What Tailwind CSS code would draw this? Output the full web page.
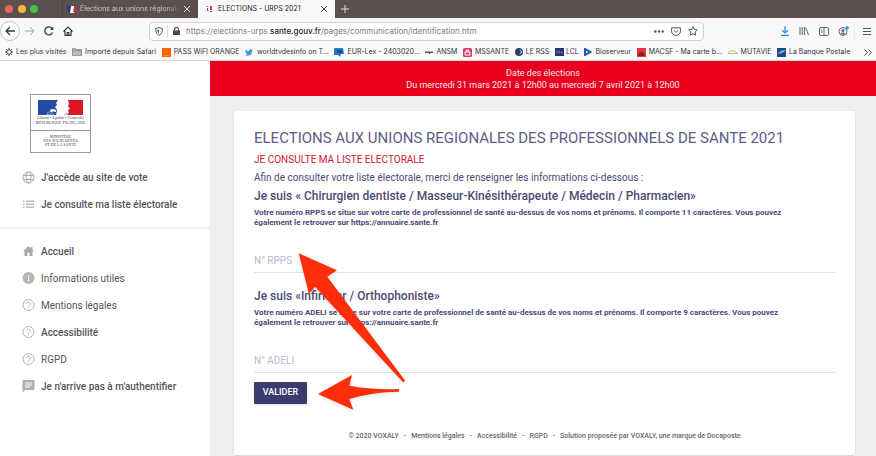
<!DOCTYPE html>
<html lang="fr">
<head>
    <meta charset="UTF-8">
    <meta name="viewport" content="width=device-width, initial-scale=1.0">
    <title>ELECTIONS - URPS 2021</title>
    <script src="https://cdn.jsdelivr.net/npm/@tailwindcss/browser@4"></script>
</head>
<body class="min-h-screen flex flex-col bg-[#eeeeee] font-[Roboto,sans-serif] text-[#4b4a75]">

    <!-- Browser window -->
    <header class="font-[Inter,sans-serif] bg-[#f9f9fb] text-[#333333] border-b border-[#d8d4d8]">

        <!-- Tabs -->
        <div class="flex h-[18px] bg-[#5a504e] text-[7px] leading-[18px]">
            <div class="flex items-center gap-1 w-[62px] pl-[5px]">
                <span class="size-2 rounded-full bg-[#f0605a]"></span>
                <span class="size-2 rounded-full bg-[#f5b83d] ml-px"></span>
                <span class="size-2 rounded-full bg-[#45c048]"></span>
            </div>
            <div class="flex items-center w-[136px] border-l border-[#4d4442] pl-1 pr-2 text-[#d0c8c6]">
                <svg class="w-[10px] h-[7px] shrink-0 mr-[3px]" viewBox="0 0 10 7"><path fill="#26337f" d="M0 0h4v6H1z"/><path fill="#fff" d="M4 0h3v7H3z"/><path fill="#d22a3c" d="M7 1h3v5H6z"/></svg>
                <span class="flex-1 whitespace-nowrap mask-r-from-85%">Élections aux unions régionale</span>
                <button type="button" aria-label="Fermer" class="ml-1"><svg class="size-[6px]" viewBox="0 0 6 6" fill="none" stroke="#e2dddb"><path d="M0 0l6 6M6 0L0 6"/></svg></button>
            </div>
            <div class="flex items-center w-[137px] bg-[#f9f9fb] pl-2 pr-2">
                <svg class="w-[6px] h-[6px] mr-[6px]" viewBox="0 0 6 6"><path fill="#8f8fae" d="M0 0h2v1H0z"/><path fill="#e3374a" d="M1 2h1v3H1zM4 0h2v4H4zM4 5h2v1H4z"/></svg>
                <span class="flex-1 whitespace-nowrap text-[#222222]">ELECTIONS - URPS 2021</span>
                <button type="button" aria-label="Fermer"><svg class="size-[6px]" viewBox="0 0 6 6" fill="none" stroke="#444"><path d="M0 0l6 6M6 0L0 6"/></svg></button>
            </div>
            <button type="button" aria-label="Nouvel onglet" class="pl-[6px]"><svg class="size-2" viewBox="0 0 8 8" fill="none" stroke="#e2dddb"><path d="M4 0v8M0 4h8"/></svg></button>
        </div>

        <!-- Address bar -->
        <div class="flex items-center h-[26px] pr-1">
            <button type="button" aria-label="Retour" class="size-5 rounded-full border border-[#c4c4c8] bg-white flex items-center justify-center">
                <svg class="size-[10px]" viewBox="0 0 10 10" fill="none" stroke="#3a3a3f" stroke-width="1.3"><path d="M10 5H1M5 1L1 5l4 4"/></svg>
            </button>
            <button type="button" aria-label="Suivant" class="ml-[5px]"><svg class="size-[10px]" viewBox="0 0 10 10" fill="none" stroke="#a3a3a8"><path d="M0 5h9M5 1l4 4-4 4"/></svg></button>
            <button type="button" aria-label="Actualiser" class="ml-[9px]"><svg class="size-[10px]" viewBox="0 0 10 10" fill="none" stroke="#3a3a3f" stroke-width="1.3"><path d="M8.5 6.5A4 4 0 1 1 8 2.5"/><path d="M9.300 .5v3.500H6z" fill="#3a3a3f" stroke="none"/></svg></button>
            <button type="button" aria-label="Page d'accueil" class="ml-[9px]"><svg class="size-[10px]" viewBox="0 0 10 10" fill="none" stroke="#3a3a3f" stroke-width="1.2"><path d="M.5 5.500L5 1l4.500 4.500M2 5v4.300h6V5M4.200 9V6.500h1.600V9"/></svg></button>
            <div class="flex items-center ml-[76px] w-[555px] h-[19px] border border-[#cfcfd4] rounded-sm bg-white px-[5px] text-[8px]">
                <svg class="w-2 h-[9px]" viewBox="0 0 8 9" fill="none" stroke="#55555a"><path d="M4 .6L7.400 1.500C7.400 5 6.500 7.200 4 8.400 1.500 7.200.6 5 .6 1.500z"/><path d="M4 2.500v4C2.800 5.600 2.400 4.500 2.300 3z" fill="#55555a" stroke="none"/></svg>
                <span class="w-px h-[13px] bg-[#dddddf] mx-1"></span>
                <svg class="w-[7px] h-2 ml-px" viewBox="0 0 7 8"><path fill="#4a4a4f" d="M0 3.500h7V8H0z"/><path fill="none" stroke="#4a4a4f" stroke-width="1.200" d="M1.500 4V2.500a2 2 0 0 1 4 0V4"/></svg>
                <span class="flex-1 ml-[6px] whitespace-nowrap text-[#7b7b80]">https://elections-urps.<span class="text-[#222222] font-medium">sante.gouv.fr</span>/pages/communication/identification.htm</span>
                <svg class="w-[10px] h-[3px]" viewBox="0 0 10 3" fill="#55555a"><circle cx="1.300" cy="1.500" r="1.200"/><circle cx="5" cy="1.500" r="1.200"/><circle cx="8.700" cy="1.500" r="1.200"/></svg>
                <svg class="w-[10px] h-[9px] ml-[7px]" viewBox="0 0 10 9" fill="none" stroke="#55555a"><path d="M.6.8h8.800v3.400a4.400 4.200 0 0 1-8.800 0z"/><path d="M2.700 3.200L5 5.400l2.300-2.200"/></svg>
                <svg class="size-[10px] ml-[7px]" viewBox="0 0 10 10" fill="none" stroke="#55555a" stroke-linejoin="round"><path d="M5 .7l1.300 2.800 3 .4-2.200 2.100.6 3.100L5 7.600 2.300 9.100l.6-3.100L.7 3.900l3-.4z"/></svg>
            </div>
            <div class="flex items-center ml-auto">
                <svg class="size-[10px]" viewBox="0 0 10 10" fill="none" stroke="#2f8ce0" stroke-width="1.200"><path d="M5 0v7M2 4.200L5 7l3-2.800M1 9.300h8"/></svg>
                <svg class="size-[10px] ml-[9px]" viewBox="0 0 10 10" fill="none" stroke="#66666b"><path d="M1 1v8M3.200 1v8M5.400 1v8M6.700 1.500L9.500 9"/></svg>
                <svg class="w-[10px] h-[9px] ml-[10px]" viewBox="0 0 10 9" fill="none" stroke="#66666b"><rect x=".5" y=".5" width="9" height="8" rx="1.500"/><path d="M5 .5v8M2 3h1.500M2 5h1.500"/></svg>
                <svg class="w-[11px] h-[10px] ml-[9px]" viewBox="0 0 11 10"><circle cx="5" cy="5.500" r="4" fill="none" stroke="#66666b"/><circle cx="5" cy="4.500" r="1.500" fill="#66666b"/><path d="M2.500 7.500a2.700 1.600 0 0 1 5 0L5 9z" fill="#66666b"/><circle cx="9.200" cy="1.800" r="1.700" fill="#2ba3ea"/></svg>
                <span class="w-px h-[18px] bg-[#ebebee] mx-[5px]"></span>
                <svg class="w-2 h-[9px] ml-[3px] mr-px" viewBox="0 0 8 9" stroke="#55555a"><path d="M0 1.500h8M0 4.500h8M0 7.500h8"/></svg>
            </div>
        </div>

        <!-- Bookmarks -->
        <nav class="h-4 text-[7px] leading-4 text-[#333333]">
            <ul class="flex items-center justify-between whitespace-nowrap pl-[5px] pr-1">
                <li><a href="#" class="flex items-center gap-[3px]"><svg class="size-2" viewBox="0 0 8 8" fill="none" stroke="#3c3c40"><circle cx="4" cy="4" r="2.300"/><path d="M4 0v1.500M4 6.500V8M0 4h1.500M6.500 4H8M1.200 1.200l1 1M5.800 5.800l1 1M1.200 6.800l1-1M5.800 2.200l1-1"/></svg>Les plus visités</a></li>
                <li><a href="#" class="flex items-center gap-[3px]"><svg class="w-[10px] h-2" viewBox="0 0 10 8"><path fill="#bdbdc0" stroke="#77777b" stroke-width=".7" d="M.5.600h3l1 1h5v6h-9zM.5 2.800h9"/></svg>Importé depuis Safari</a></li>
                <li><a href="#" class="flex items-center gap-[3px]"><svg class="size-[9px]" viewBox="0 0 9 9"><path fill="#fa6400" d="M0 0h9v9H0z"/><path fill="#ffa35e" d="M2 7h5v.700H2z"/></svg>PASS WiFI ORANGE</a></li>
                <li><a href="#" class="flex items-center gap-[4px]"><svg class="w-2 h-[7px]" viewBox="0 0 24 20"><path fill="#3d9be0" d="M24 2.400a10 10 0 0 1-2.800.8A5 5 0 0 0 23.300.500a10 10 0 0 1-3.100 1.200A4.900 4.900 0 0 0 11.800 6.200 14 14 0 0 1 1.700 1a4.900 4.900 0 0 0 1.500 6.600L1 7a4.900 4.900 0 0 0 3.900 4.900l-2.200.1a4.900 4.900 0 0 0 4.600 3.400A10 10 0 0 1 0 17.500 14 14 0 0 0 21.500 5z"/></svg>worldtvdesinfo on T...</a></li>
                <li><a href="#" class="flex items-center gap-[3px]"><svg class="w-[10px] h-[9px]" viewBox="0 0 10 9"><path fill="#1d7cc4" d="M1 0h8l1 6H7L6 9 4 7H0V1z"/><path fill="#15508e" d="M3 2h5v3H3z"/></svg>EUR-Lex - 2403020...</a></li>
                <li><a href="#" class="flex items-center gap-[3px]"><svg class="w-[8px] h-[3px]" viewBox="0 0 8 3"><path fill="#55555c" d="M0 .500h8v1.500H5V3H4V2H0z"/></svg>ANSM</a></li>
                <li><a href="#" class="flex items-center gap-[3px]"><svg class="size-[9px]" viewBox="0 0 9 9"><rect width="9" height="9" rx="1.500" fill="#d83a69"/><path fill="none" stroke="#fff" d="M2 4h5v3H2zM3.300 4V2h2.400v2"/></svg>MSSANTE</a></li>
                <li><a href="#" class="flex items-center gap-[3px]"><svg class="size-2" viewBox="0 0 8 8"><circle cx="4" cy="4" r="4" fill="#2c3e68"/><path fill="#a9bdd2" d="M4.500 1.500C8 2 8 6 4 6.500 6 5 6 3 4.500 1.500z"/></svg>LE RSS</a></li>
                <li><a href="#" class="flex items-center gap-[2px]"><svg class="w-[9px] h-2" viewBox="0 0 9 8"><path fill="#26336c" d="M0 0h9v8H0z"/><path fill="none" stroke="#8b94bc" stroke-width=".7" d="M1 3h1v2h1M5 3H4v2h1M6.500 3v2H8"/></svg>LCL</a></li>
                <li><a href="#" class="flex items-center gap-[3px]"><svg class="size-2" viewBox="0 0 8 8"><path fill="none" stroke="#255da8" stroke-width="2" d="M1 1l5.500 3L1 7z"/></svg>Bioserveur</a></li>
                <li><a href="#" class="flex items-center gap-[3px]"><svg class="size-[9px]" viewBox="0 0 9 9"><path fill="#de3640" d="M0 0h9v9H0z"/><path fill="#8f1c2e" d="M1 8l2-5 1.500 2L6 3l2 5z"/></svg>MACSF - Ma carte b...</a></li>
                <li><a href="#" class="flex items-center gap-[3px]"><svg class="w-[10px] h-[4px]" viewBox="0 0 10 4" fill="none"><path stroke="#d6b544" d="M0 3c2-3 6-3 9 0"/><path stroke="#7a9c79" d="M0 3.500h10" stroke-width=".6"/></svg>MUTAVIE</a></li>
                <li><a href="#" class="flex items-center gap-[3px]"><svg class="size-[9px]" viewBox="0 0 9 9"><path fill="#1c4c7e" d="M0 0h9v9H0z"/><path fill="#5ea6cf" d="M1 6c2-4 4-4 8-4L6 5z"/></svg>La Banque Postale</a></li>
                <li><button type="button" aria-label="Plus de marque-pages" class="ml-2 flex"><svg class="w-2 h-[7px]" viewBox="0 0 8 7" fill="none" stroke="#444"><path d="M.5.500l3 3-3 3M4.500.500l3 3-3 3"/></svg></button></li>
            </ul>
        </nav>
    </header>

    <div class="flex flex-1">

        <!-- Side menu -->
        <aside class="w-[210px] shrink-0 bg-white text-[10px] leading-[15px] text-[#555555]">
            <div class="ml-[30px] mt-[33px] w-[61px] border border-[#999999] text-center font-['Liberation_Serif',serif] text-[#444444]">
                <div class="h-9 pt-[5px] border-b border-[#999999]">
                    <svg class="mx-auto w-[45px] h-[15px]" viewBox="0 0 45 15">
                        <path fill="#2548a0" d="M0 0h20l-2 3 1 2-2 2 2 3-1 5H0z"/>
                        <path fill="#fff" d="M12 10c2-1.500 4-1 6 0v2l-3-.5-2 1z"/>
                        <path fill="none" stroke="#b9c6e6" stroke-width=".8" d="M9 13c2-1 3-2 6-1M8 14.500c3 0 5-1 8-.5"/>
                        <path fill="#dc1622" d="M30 0h15v15H27l4-2-1-3 2-1-2-3 1-2z"/>
                        <path fill="#c9c9d2" d="M27 13c1-1 3 0 3 2h-4z"/>
                    </svg>
                    <p class="text-[4px] leading-[5px] italic whitespace-nowrap">Liberté • Égalité • Fraternité</p>
                    <p class="text-[5px] leading-[6px] whitespace-nowrap [font-variant:small-caps]">République Française</p>
                </div>
                <div class="h-[21px] pt-1 text-[4px] leading-[4px]">
                    <p>MINISTÈRE</p>
                    <p>DES SOLIDARITÉS</p>
                    <p>ET DE LA SANTÉ</p>
                </div>
            </div>

            <ul class="mt-[17px] pb-[15px] pl-[22px] space-y-3 border-b-2 border-[#f0f0f0] font-medium">
                <li><a href="#" class="flex items-center gap-[6px]"><svg class="size-[13px]" viewBox="0 0 13 13" fill="none" stroke="#aaaaaa"><circle cx="6.500" cy="6.500" r="5.500"/><ellipse cx="6.500" cy="6.500" rx="2.500" ry="5.500"/><path d="M1.500 4.500h10M1.500 8.500h10"/></svg>J'accède au site de vote</a></li>
                <li><a href="#" class="flex items-center gap-[6px]"><svg class="size-[13px]" viewBox="0 0 13 13" fill="#bbbbbb"><path d="M1 2.500h1.500V4H1zM1 5.500h1.500V7H1zM1 8.500h1.500V10H1zM4 2.500h8V4H4zM4 5.500h8V7H4zM4 8.500h8V10H4z"/></svg>Je consulte ma liste électorale</a></li>
            </ul>

            <ul class="mt-[15px] pl-[22px] space-y-3">
                <li class="font-medium"><a href="#" class="flex items-center gap-[6px]"><svg class="size-[13px]" viewBox="0 0 13 13" fill="#aaaaaa"><path d="M6.500 1L1 6.200h1.500V11h3V7.500h2V11h3V6.200H12L10.500 4.700V2H9v1.300z"/></svg>Accueil</a></li>
                <li><a href="#" class="flex items-center gap-[6px]"><svg class="size-[13px]" viewBox="0 0 13 13"><circle cx="6.500" cy="6" r="6" fill="#b5b5b5"/><path fill="#fff" d="M6 3h1.200v1.200H6zM6 5.300h1.200v4H6z"/></svg>Informations utiles</a></li>
                <li><a href="#" class="flex items-center gap-[6px]"><svg class="size-[13px]" viewBox="0 0 13 13"><circle cx="6.500" cy="6" r="5.500" fill="none" stroke="#b5b5b5"/><path fill="none" stroke="#b5b5b5" d="M4.700 4.700a1.800 1.700 0 1 1 2.700 1.500c-.7.500-.9.800-.9 1.500M6.500 8.500v1.100"/></svg>Mentions légales</a></li>
                <li class="font-medium"><a href="#" class="flex items-center gap-[6px]"><svg class="size-[13px]" viewBox="0 0 13 13"><circle cx="6.500" cy="6" r="5.500" fill="none" stroke="#b5b5b5"/><path fill="none" stroke="#b5b5b5" d="M4.700 4.700a1.800 1.700 0 1 1 2.700 1.500c-.7.500-.9.800-.9 1.500M6.500 8.500v1.100"/></svg>Accessibilité</a></li>
                <li><a href="#" class="flex items-center gap-[6px]"><svg class="size-[13px]" viewBox="0 0 13 13"><circle cx="6.500" cy="6" r="5.500" fill="none" stroke="#b5b5b5"/><path fill="none" stroke="#b5b5b5" d="M4.700 4.700a1.800 1.700 0 1 1 2.700 1.500c-.7.500-.9.800-.9 1.500M6.500 8.500v1.100"/></svg>RGPD</a></li>
                <li class="font-medium"><a href="#" class="flex items-center gap-[6px]"><svg class="size-[13px]" viewBox="0 0 13 13"><path fill="#aeaeae" d="M1.500 0h10a1 1 0 0 1 1 1v8a1 1 0 0 1-1 1H3L.5 12.500V1a1 1 0 0 1 1-1z"/><path stroke="#fff" d="M3 3h7M3 5h7M3 7h5"/></svg>Je n'arrive pas à m'authentifier</a></li>
            </ul>
        </aside>

        <main class="flex-1 min-w-0">
            <div class="h-[35px] pt-[6px] bg-[#e8001e] text-center text-[9px] leading-[12px] text-[#ffe9ea]">
                <p>Date des élections</p>
                <p>Du mercredi 31 mars 2021 à 12h00 au mercredi 7 avril 2021 à 12h00</p>
            </div>

            <div class="relative mt-[15px] ml-6 mr-[21px] px-5 pt-[17px] pb-3 bg-white rounded-[2px] shadow-sm">
                <h1 class="text-[15px] leading-5 text-[#5d5c86]">ELECTIONS AUX UNIONS REGIONALES DES PROFESSIONNELS DE SANTE 2021</h1>
                <h2 class="mt-1 text-[10px] leading-[15px] text-[#cf1734]">JE CONSULTE MA LISTE ELECTORALE</h2>
                <p class="mt-[3px] text-[10px] leading-[15px]">Afin de consulter votre liste électorale, merci de renseigner les informations ci-dessous :</p>

                <form>
                    <h3 class="mt-[3px] text-[12px] leading-4 font-medium">Je suis « Chirurgien dentiste / Masseur-Kinésithérapeute / Médecin / Pharmacien»</h3>
                    <p class="mt-1 pr-5 text-[8px] leading-[10px] font-bold">Votre numéro RPPS se situe sur votre carte de professionnel de santé au-dessus de vos noms et prénoms. Il comporte 11 caractères. Vous pouvez également le retrouver sur https://annuaire.sante.fr</p>
                    <input type="text" id="rpps" aria-label="N° RPPS" placeholder="N° RPPS" class="block w-full mt-5 h-[25px] border-b border-[#e3e3e6] text-[10px] placeholder:text-[#b9b9ca] outline-none">

                    <h3 class="mt-[15px] text-[12px] leading-4 font-medium">Je suis «Infirmier / Orthophoniste»</h3>
                    <p class="mt-1 pr-5 text-[8px] leading-[10px] font-bold">Votre numéro ADELI se situe sur votre carte de professionnel de santé au-dessus de vos noms et prénoms. Il comporte 9 caractères. Vous pouvez également le retrouver sur https://annuaire.sante.fr</p>
                    <input type="text" id="adeli" aria-label="N° ADELI" placeholder="N° ADELI" class="block w-full mt-5 h-[25px] border-b border-[#e3e3e6] text-[10px] placeholder:text-[#b9b9ca] outline-none">

                    <button type="submit" class="block mt-[9px] w-[53px] h-[22px] rounded-[1px] bg-[#3c3b6e] text-white text-[9px] font-medium shadow">VALIDER</button>
                </form>

                <footer class="mt-[25px] flex justify-center gap-[5px] whitespace-nowrap text-[7px] leading-[14px] font-medium text-[#666666]">
                    <span>© 2020 VOXALY</span><span>-</span>
                    <a href="#">Mentions légales</a><span>-</span>
                    <a href="#">Accessibilité</a><span>-</span>
                    <a href="#">RGPD</a><span>-</span>
                    <span>Solution proposée par VOXALY, une marque de Docaposte</span>
                </footer>

                <!-- Arrows to the field and the button -->
                <svg class="absolute left-[60px] top-[136px] w-[120px] h-[170px] pointer-events-none drop-shadow" viewBox="294 247 120 170" fill="#ff2d0c">
                    <path d="M298.700 253.300L337 270.300 327.300 276.700 405 380.500 403.300 382.500 315 286.700 309 294z"/>
                    <path d="M318 394L352 375 349.300 385.700Q372 390 399 389V391.700Q372 392 349.300 399L353.300 409.700z"/>
                </svg>
            </div>
        </main>
    </div>

</body>
</html>
